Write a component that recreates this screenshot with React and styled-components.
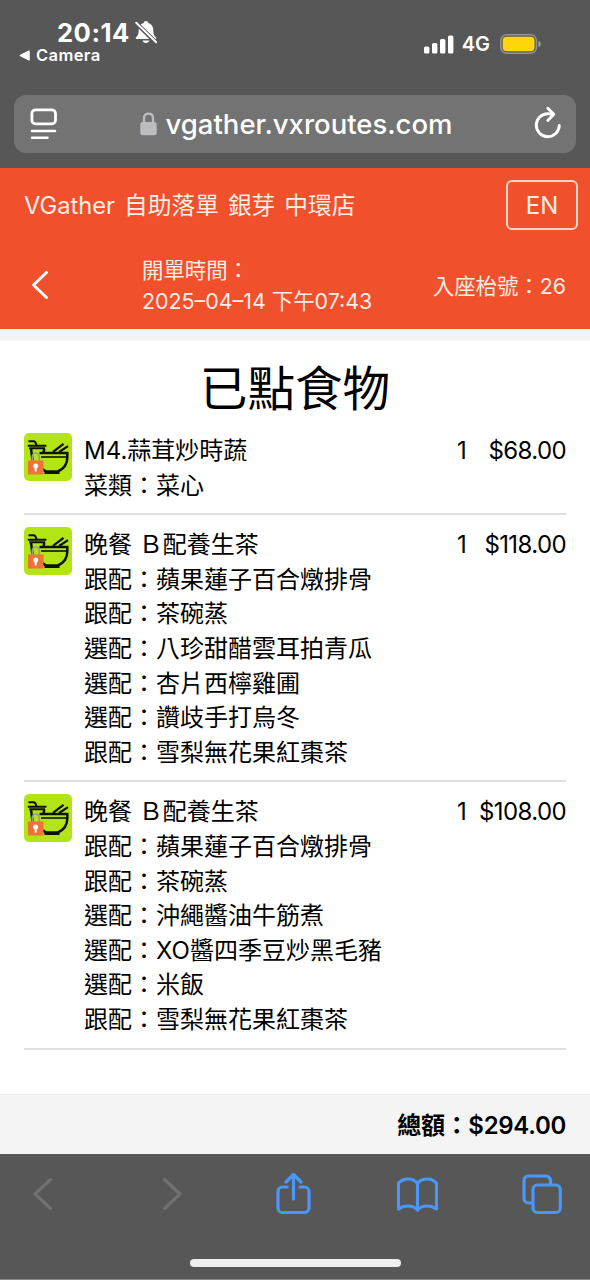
import React from 'react';
import styled, { createGlobalStyle, ThemeProvider } from 'styled-components';

const theme = {
  chrome: '#575757',
  field: '#737373',
  brand: '#f0502c',
  cream: '#ffeee5',
  divider: '#e0e0e0',
  surface: '#f4f4f4',
};

const GlobalStyle = createGlobalStyle`
  * {
    box-sizing: border-box;
  }

  body {
    margin: 0;
    background: #fff;
    font-family: Inter, 'Noto Sans CJK TC', sans-serif;
    color: #000;
  }

  svg {
    display: block;
  }
`;

const Screen = styled.div`
  width: 590px;
  height: 1280px;
  display: flex;
  flex-direction: column;
  overflow: hidden;
`;

const BrowserTop = styled.header`
  flex: none;
  height: 168px;
  padding: 19px 14px 0;
  background: ${({ theme }) => theme.chrome};
  color: #fff;
`;

const StatusBar = styled.div`
  height: 76px;
  display: flex;
  justify-content: space-between;
`;

const StatusLeft = styled.div`
  display: flex;
  flex-direction: column;
`;

const Clock = styled.div`
  display: flex;
  align-items: center;
  gap: 5px;
  height: 26px;
  padding-left: 43px;
  font-size: 25.6px;
  font-weight: 700;
  letter-spacing: 0.5px;
`;

const BackToApp = styled.div`
  display: flex;
  align-items: center;
  gap: 6px;
  height: 20px;
  padding-left: 5px;
  font-size: 16.5px;
  font-weight: 600;
  letter-spacing: 0.4px;
`;

const StatusRight = styled.div`
  display: flex;
  align-items: center;
  height: 50px;
  padding-right: 35px;
`;

const Network = styled.span`
  margin: 0 10px 0 8px;
  font-size: 20px;
  font-weight: 600;
`;

const AddressBar = styled.div`
  height: 58px;
  display: flex;
  align-items: center;
  justify-content: space-between;
  padding: 0 14px 0 16px;
  border-radius: 12px;
  background: ${({ theme }) => theme.field};
`;

const Domain = styled.div`
  display: flex;
  align-items: center;
  gap: 9px;
  font-size: 27.5px;
  font-weight: 500;
`;

const ShopHeader = styled.section`
  flex: none;
  height: 161px;
  padding: 12px 12px 0 24px;
  background: ${({ theme }) => theme.brand};
  color: ${({ theme }) => theme.cream};
  font-weight: 400;
`;

const ShopRow = styled.div`
  height: 50px;
  display: flex;
  align-items: center;
  justify-content: space-between;
`;

const ShopName = styled.div`
  padding-bottom: 2px;
  font-size: 23.7px;
  word-spacing: 2.4px;
  white-space: pre;
`;

const LangButton = styled.button`
  width: 72px;
  height: 50px;
  border: 2px solid #fbd5c6;
  border-radius: 6px;
  background: transparent;
  color: inherit;
  font: inherit;
  font-size: 24px;
`;

const OrderMeta = styled.div`
  height: 98px;
  display: flex;
  align-items: center;
  padding: 11px 12px 0 7px;
  font-size: 21.4px;
`;

const OpenedAt = styled.div`
  margin-left: 93px;
  padding-top: 2px;
  line-height: 31px;
`;

const TableNo = styled.div`
  margin-left: auto;
`;

const Strip = styled.div`
  flex: none;
  height: 12px;
  background: #f4f4f5;
`;

const Title = styled.h1`
  margin: 0;
  padding-top: 12px;
  height: 80px;
  font-size: 47.6px;
  font-weight: 400;
  line-height: 71px;
  text-align: center;
`;

const OrderList = styled.main`
  flex: 1;
  padding: 0 24px;
`;

const Order = styled.article`
  display: flex;
  align-items: flex-start;
  padding: 12px 0 11px;
  border-bottom: 2px solid ${({ theme }) => theme.divider};
  font-size: 24px;
  line-height: 34.6px;
`;

const OrderText = styled.div`
  flex: 1;
  margin: 1px 0 -1px 12px;
`;

const Line = styled.div`
  white-space: pre;
`;

const Qty = styled.div`
  width: 24px;
  margin-top: 1px;
  text-align: center;
`;

const Price = styled.div`
  width: 92px;
  margin-top: 1px;
  letter-spacing: -0.6px;
  text-align: right;
`;

const TotalBar = styled.footer`
  flex: none;
  height: 60px;
  padding: 0 24px;
  border-top: 1px solid #ececec;
  background: ${({ theme }) => theme.surface};
  font-size: 24px;
  font-weight: 600;
  letter-spacing: -0.3px;
  line-height: 61px;
  text-align: right;
`;

const BrowserBottom = styled.nav`
  flex: none;
  height: 126px;
  background: ${({ theme }) => theme.chrome};
  border-bottom: 1px solid #8a8a8a;
`;

const Tools = styled.div`
  height: 105px;
  display: flex;
  justify-content: space-between;
  padding: 17px 27px 0 22px;
`;

const HomeIndicator = styled.div`
  width: 211px;
  height: 8px;
  margin: 0 auto;
  border-radius: 4px;
  background: #efefef;
`;

const BellOff = () => (
  <svg width="22" height="24" viewBox="0 0 22 24">
    <path
      d="M11 1c-1.300 0-2.200.8-2.400 1.900C5.300 4 3.700 6.600 3.700 10c0 4.200-1 5.800-2.600 7.200-.7.800-.4 1.800.6 1.800h18.600c1 0 1.300-1 .6-1.800-1.600-1.400-2.600-3-2.600-7.200 0-3.400-1.600-6-4.900-7.100C13.200 1.800 12.300 1 11 1z"
      fill="#fff"
    />
    <path d="M7.500 20.500h7c-.5 1.500-1.800 2.500-3.500 2.500s-3-1-3.500-2.500z" fill="#fff" />
    <path d="M0.500 2.500l21 20.500" stroke="#575757" strokeWidth="4.400" />
    <path d="M1.200 2.700l20 19.600" stroke="#fff" strokeWidth="1.900" strokeLinecap="round" />
  </svg>
);

const BackTriangle = () => (
  <svg width="11" height="11" viewBox="0 0 11 11">
    <path d="M0.800 5.500L10.200 0.800v9.400z" fill="#fff" stroke="#fff" strokeLinejoin="round" />
  </svg>
);

const Signal = () => (
  <svg width="30" height="19" viewBox="0 0 30 19" fill="#fff">
    <rect x="0" y="11.500" width="5.400" height="7" rx="1.500" />
    <rect x="8" y="8" width="5.400" height="10.500" rx="1.500" />
    <rect x="16" y="4" width="5.400" height="14.500" rx="1.500" />
    <rect x="24" y="0.500" width="5.400" height="18" rx="1.500" />
  </svg>
);

const Battery = () => (
  <svg width="41" height="20" viewBox="0 0 41 20">
    <rect x="0.800" y="0.800" width="35.600" height="18.400" rx="5.800" fill="none" stroke="#939393" strokeWidth="1.500" />
    <rect x="2.700" y="2.700" width="31.800" height="14.600" rx="4" fill="#fed60a" />
    <path d="M38.500 7v6c1.400-.6 2.200-1.700 2.200-3s-.8-2.400-2.200-3z" fill="#a5a5a5" />
  </svg>
);

const PageMenu = () => (
  <svg width="28" height="32" viewBox="0 0 28 32" fill="none" stroke="#fff" strokeWidth="2.800" strokeLinecap="round">
    <rect x="1.900" y="1.900" width="23.600" height="14" rx="3.600" />
    <path d="M2 23h23M2 29.800h15.500" strokeWidth="2.500" />
  </svg>
);

const Lock = () => (
  <svg width="17" height="24" viewBox="0 0 17 24">
    <path d="M4 11V6.500C4 3.500 5.800 1.700 8.500 1.700S13 3.500 13 6.500V11" fill="none" stroke="#bcbbc0" strokeWidth="2.300" />
    <rect x="0.300" y="10" width="16.400" height="13.300" rx="2.500" fill="#bcbbc0" />
  </svg>
);

const Reload = () => (
  <svg width="28" height="36" viewBox="0 0 28 36" fill="none" stroke="#fff" strokeWidth="2.900" strokeLinecap="round" strokeLinejoin="round">
    <path d="M25.300 19.500a11.500 11.500 0 1 1-11.500-11.800c2 0 3.600.2 5.200.6" />
    <path d="M13.800 2.200l6 6-6 6.200" />
  </svg>
);

const HeaderBack = () => (
  <svg width="18" height="30" viewBox="0 0 18 30">
    <path d="M15.500 2.500L2.500 15l13 12.500" fill="none" stroke="#fff" strokeWidth="3" strokeLinecap="round" strokeLinejoin="round" />
  </svg>
);

const Chevron = ({ right }) => (
  <svg width="42" height="46" viewBox="0 0 42 46">
    <path
      d={right ? 'M17.500 8.500L33 23 17.500 37.500' : 'M28.500 8.500L13 23l15.500 14.500'}
      fill="none"
      stroke="#717171"
      strokeWidth="3.200"
      strokeLinecap="round"
      strokeLinejoin="round"
    />
  </svg>
);

const Share = () => (
  <svg width="42" height="46" viewBox="-3.500 0 42 46" fill="none" stroke="#4a97fb" strokeWidth="3.200" strokeLinecap="round" strokeLinejoin="round">
    <path d="M11.500 16H7a4.500 4.500 0 0 0-4.500 4.500V37A4.500 4.500 0 0 0 7 41.500h22a4.500 4.500 0 0 0 4.500-4.500V20.500A4.500 4.500 0 0 0 29 16h-4.500" />
    <path d="M18 28V4M10.500 11L18 3.500l7.500 7.500" />
  </svg>
);

const Book = () => (
  <svg width="42" height="46" viewBox="0 0 42 46" fill="none" stroke="#4a97fb" strokeWidth="3.100" strokeLinecap="round" strokeLinejoin="round">
    <path d="M21.500 12.500C19.500 9.500 16 8 12 8S5 9.500 2.500 12v26c2.500-2 5.500-3 9.500-3s7.500 1.500 9.500 4c2-2.500 5.500-4 9.500-4s7 1 9.500 3V12C38 9.500 35 8 31 8s-7.500 1.500-9.500 4.500z" />
    <path d="M21.500 12.500V39" />
  </svg>
);

const Tabs = () => (
  <svg width="42" height="46" viewBox="0 0 42 46" fill="none" stroke="#4a97fb" strokeWidth="3.200" strokeLinejoin="round">
    <path d="M12 32H7.500A4.500 4.500 0 0 1 3 27.500V9.500A4.500 4.500 0 0 1 7.500 5H25a4.500 4.500 0 0 1 4.500 4.500V14" />
    <rect x="12" y="14" width="27.300" height="27.500" rx="4.500" />
  </svg>
);

const DishIcon = () => (
  <svg width="48" height="48" viewBox="0 0 48 48">
    <rect width="48" height="48" rx="5" fill="#b3e516" />
    <g fill="none" stroke="#0c1204" strokeWidth="2.500">
      <path d="M4.500 8.200H9.500c1.800 0 2.400 1.200 3 4" strokeWidth="2.100" />
      <path d="M3.800 12.700h18.600M5.200 15.200h15.800" strokeWidth="2.100" />
      <path d="M7 15.500l1.500 12M20.200 15.500l-.6 4.500" />
      <path d="M15.500 20H43.300v4.500c0 6.500-3.800 11.500-9.500 14H22c-1.500-.6-2.800-1.700-3.500-2.800" />
      <path d="M17 24h26.500" strokeWidth="1.600" />
      <path d="M20.500 39.600h15" strokeWidth="2.800" />
      <path d="M29 18.800l10.500-8M35 19l9-5.800" strokeWidth="2.200" />
    </g>
    <path d="M8.300 28v-4.500a3.500 3.500 0 0 1 7 0V28" fill="none" stroke="#9a9f8c" strokeWidth="1.700" />
    <rect x="4" y="27.500" width="15.500" height="14" fill="#ef7338" />
    <circle cx="11.700" cy="33" r="2.500" fill="#fff" />
    <path d="M11.700 34v4.500" stroke="#fff" strokeWidth="2" />
  </svg>
);

const orders = [
  {
    name: 'M4.蒜茸炒時蔬',
    qty: 1,
    price: '$68.00',
    options: ['菜類：菜心'],
  },
  {
    name: '晚餐 Ｂ配養生茶',
    qty: 1,
    price: '$118.00',
    options: [
      '跟配：蘋果蓮子百合燉排骨',
      '跟配：茶碗蒸',
      '選配：八珍甜醋雲耳拍青瓜',
      '選配：杏片西檸雞圃',
      '選配：讚歧手打烏冬',
      '跟配：雪梨無花果紅棗茶',
    ],
  },
  {
    name: '晚餐 Ｂ配養生茶',
    qty: 1,
    price: '$108.00',
    options: [
      '跟配：蘋果蓮子百合燉排骨',
      '跟配：茶碗蒸',
      '選配：沖繩醬油牛筋煮',
      '選配：XO醬四季豆炒黑毛豬',
      '選配：米飯',
      '跟配：雪梨無花果紅棗茶',
    ],
  },
];

const OrderRow = ({ order }) => (
  <Order>
    <DishIcon />
    <OrderText>
      <Line>{order.name}</Line>
      {order.options.map((option) => (
        <Line key={option}>{option}</Line>
      ))}
    </OrderText>
    <Qty>{order.qty}</Qty>
    <Price>{order.price}</Price>
  </Order>
);

const App = () => {
  return (
    <ThemeProvider theme={theme}>
      <GlobalStyle />
      <Screen lang="zh-Hant">
        <BrowserTop>
          <StatusBar>
            <StatusLeft>
              <Clock>
                20:14
                <BellOff />
              </Clock>
              <BackToApp>
                <BackTriangle />
                Camera
              </BackToApp>
            </StatusLeft>
            <StatusRight>
              <Signal />
              <Network>4G</Network>
              <Battery />
            </StatusRight>
          </StatusBar>
          <AddressBar>
            <PageMenu />
            <Domain>
              <Lock />
              vgather.vxroutes.com
            </Domain>
            <Reload />
          </AddressBar>
        </BrowserTop>

        <ShopHeader>
          <ShopRow>
            <ShopName>VGather 自助落單 銀芽 中環店</ShopName>
            <LangButton>EN</LangButton>
          </ShopRow>
          <OrderMeta>
            <HeaderBack />
            <OpenedAt>
              <div>開單時間：</div>
              <div>2025–04–14 下午07:43</div>
            </OpenedAt>
            <TableNo>入座枱號：26</TableNo>
          </OrderMeta>
        </ShopHeader>
        <Strip />

        <Title>已點食物</Title>
        <OrderList>
          {orders.map((order, index) => (
            <OrderRow key={index} order={order} />
          ))}
        </OrderList>

        <TotalBar>總額：$294.00</TotalBar>
        <BrowserBottom>
          <Tools>
            <Chevron />
            <Chevron right />
            <Share />
            <Book />
            <Tabs />
          </Tools>
          <HomeIndicator />
        </BrowserBottom>
      </Screen>
    </ThemeProvider>
  );
};

export default App;
